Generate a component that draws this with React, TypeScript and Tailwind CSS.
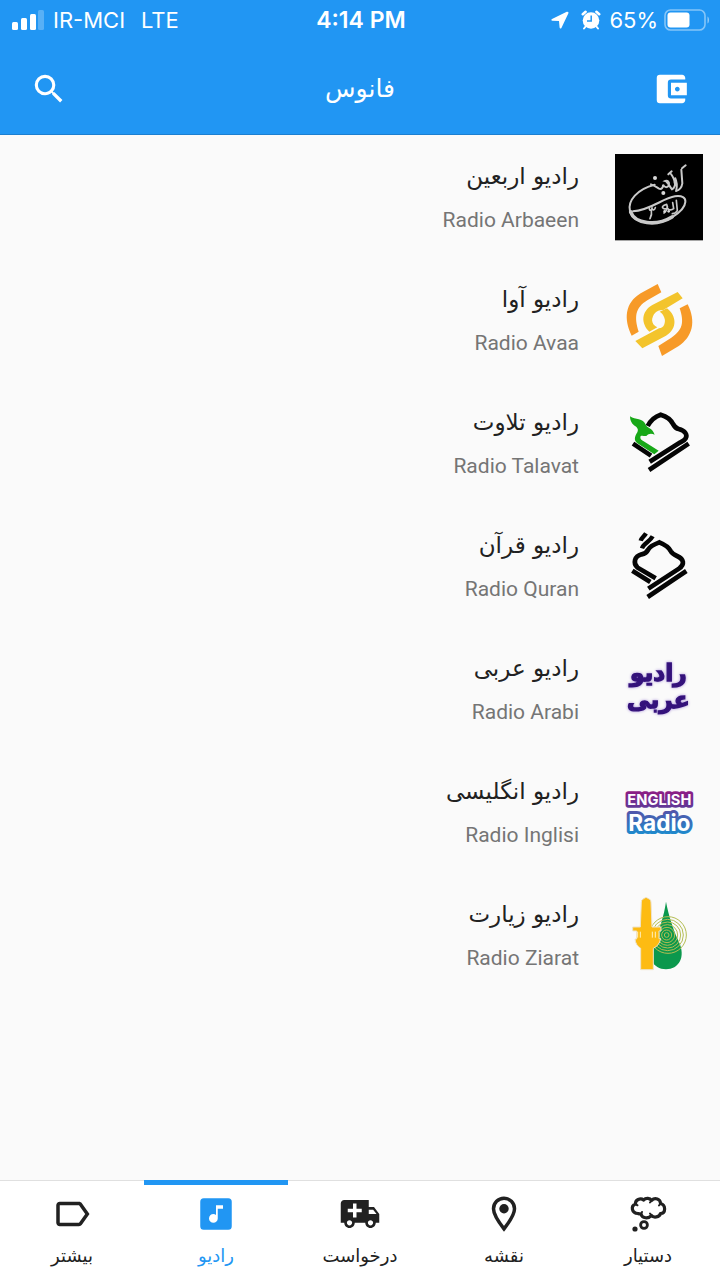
import type { ReactNode } from "react";
import { MdAccountBalanceWallet, MdLabelOutline, MdSearch } from "react-icons/md";

const persian = "font-['DejaVu_Sans',sans-serif]";

function SignalIcon() {
  return (
    <svg width="33" height="20" viewBox="0 0 33 20" fill="currentColor" aria-hidden="true">
      <rect x="0" y="12" width="6" height="8" rx="1.5" />
      <rect x="9" y="8" width="6" height="12" rx="1.5" />
      <rect x="18" y="4" width="6" height="16" rx="1.5" />
      <rect x="26" y="0" width="6" height="20" rx="1.5" opacity="0.25" />
    </svg>
  );
}

function LocationIcon() {
  return (
    <svg width="18" height="18" viewBox="0 0 18 18" fill="currentColor" aria-hidden="true">
      <path d="M15.800.8 1 8c-1 .5-.8 1.700.3 1.700l6.700.4.6 6.500c.1 1.100 1.300 1.300 1.800.3L17.400 2.300C17.900 1.200 16.900.3 15.800.8Z" />
    </svg>
  );
}

function AlarmIcon() {
  return (
    <svg width="20" height="20" viewBox="0 0 20 20" aria-hidden="true">
      <g stroke="currentColor" strokeLinecap="round" fill="none">
        <path d="M1.800 4.200 4.600 1.800M18.200 4.200 15.400 1.800" strokeWidth="2.600" />
        <path d="m5 16-2 2.500M15 16l2 2.500" strokeWidth="2" />
      </g>
      <circle cx="10" cy="10.500" r="8.300" fill="currentColor" />
      <path d="M10.200 5.500v5.500H6" stroke="#2196f3" strokeWidth="1.500" fill="none" />
    </svg>
  );
}

function BatteryIcon() {
  return (
    <svg width="46" height="22" viewBox="0 0 46 22" aria-hidden="true">
      <rect x="1" y="1" width="40" height="20" rx="5.500" fill="none" stroke="#fff" strokeOpacity="0.45" strokeWidth="1.600" />
      <rect x="3.500" y="3.500" width="22" height="15" rx="3" fill="#fff" />
      <path d="M43.500 7.500c2 1 2 6 0 7Z" fill="#fff" fillOpacity="0.5" />
    </svg>
  );
}

function ArbaeenLogo() {
  return (
    <svg viewBox="45 38 264 264" className="size-full" aria-hidden="true">
      <rect x="45" y="41" width="264" height="259" fill="#000" />
      <g fill="none" stroke="#c9c9c9" strokeLinecap="round">
        <path d="M164 133C112 146 82 181 90 212c10 39 82 48 129 17 48-31 49-67 6-61-36 5-76 43-126 45" strokeWidth="6" />
        <path d="M92 215c12 35 77 44 124 15" strokeWidth="11" />
        <path d="M153 132c9 3 17 9 24 13 8 3 13-4 12-12 6 11 16 9 18-1 1-7-4-13-11-10 7 2 12 16 20 25 9-3 11-16 9-35 5 11 7 23 4 36" strokeWidth="6" />
        <path d="m244 88 3 41c-2 13-9 20-19 23M213 101c7 10 11 17 11 27M246 84l11-9M205 102l10-9" strokeWidth="6" />
        <path d="M148 205c1 7 6 6 8-1 2 7 8 6 10-2M154 210c2 9 0 17-4 25M229 180l3 31c-4 7-9 9-15 9M218 187l3 18c-6 5-13 5-17 0M200 192c-12 2-17 10-8 13 8 3 13-3 8-13M201 195c2 9-2 19-9 23" strokeWidth="5" />
      </g>
      <g fill="#d8d8d8">
        <circle cx="165" cy="113" r="6" />
        <circle cx="190" cy="158" r="6" />
        <circle cx="194" cy="213" r="4" />
        <circle cx="206" cy="213" r="4" />
      </g>
    </svg>
  );
}

function AvaaLogo() {
  return (
    <svg viewBox="45 46 264 264" className="size-full" aria-hidden="true">
      <g fill="#f79a28">
        <path d="m173 70 11 25-42 24c-36 22-40 49-26 94l-21 12c-24-49-21-98 27-127Z" />
        <path d="m263 131-24 12c14 42 9 66-25 88l-39 25 11 30 49-29c43-28 54-75 28-126Z" />
      </g>
      <g fill="#f3c42c">
        <path d="m233 94 15 19-58 35c-21-1-33 13-33 30 0 10 5 18 15 22l-24 13c-26-25-24-61 9-80Z" />
        <path d="m106 241 71-38c15-1 21-18 16-32-3-9-8-15-14-18l22-10c28 21 33 61-3 82l-71 38Z" />
      </g>
      <circle cx="175" cy="179" r="18" fill="#fafafa" />
    </svg>
  );
}

function TalavatLogo() {
  return (
    <svg viewBox="45 40 264 264" className="size-full" aria-hidden="true">
      <g fill="none" stroke="#050505" strokeWidth="14">
        <path d="M143 121c8-15 20-28 39-34 17 5 31 15 37 28 5 9 8 13 17 15 20 5 27 18 21 28-3 6-10 9-16 12l-92 58" />
        <path d="m266 174-119 79M99 174l54 36" />
      </g>
      <path d="M90 92c16 12 39 3 48 27 5 9 18 7 26 28-10-5-18-4-25 4-6 1-11-2-17 0-3 8 2 12 9 16l45 28-13 11-52-34c-10-8-7-20 1-32 5-10-2-16-10-21-8-7-12-16-12-27Z" fill="#18a818" />
    </svg>
  );
}

function QuranLogo() {
  return (
    <svg viewBox="45 34 264 264" className="size-full" aria-hidden="true">
      <g fill="none" stroke="#050505" strokeWidth="14">
        <path d="m167 203-54-32c-15-13-10-34 12-40 12-2 16-7 20-15 5-9 17-15 33-21 17 7 29 15 34 26 4 8 10 11 19 15 21 9 24 26 6 38l-92 60" />
        <path d="M259 181 143 259M97 180l54 34" />
        <path d="M122 90c2-9 10-12 16-22M126 113c4-15 24-20 32-36" strokeWidth="13" />
      </g>
    </svg>
  );
}

function ArabiLogo() {
  return (
    <svg viewBox="45 14 264 264" className="size-full" aria-hidden="true">
      <g
        fill="#34127b"
        stroke="#34127b"
        strokeWidth="4"
        textAnchor="middle"
        direction="rtl"
        className="font-['DejaVu_Sans',sans-serif] font-bold drop-shadow-[0_0_4px_#a58cd8]"
      >
        <text x="175" y="121" fontSize="70">رادیو</text>
        <text x="175" y="203" fontSize="70">عربی</text>
      </g>
    </svg>
  );
}

function EnglishLogo() {
  return (
    <svg viewBox="45 -8 264 264" className="size-full" aria-hidden="true">
      <defs>
        <linearGradient id="english-top" x1="0" x2="0" y1="0" y2="1">
          <stop offset="0" stopColor="#8d1c84" />
          <stop offset="1" stopColor="#5c3b9a" />
        </linearGradient>
        <linearGradient id="english-bottom" x1="0" x2="0" y1="0" y2="1">
          <stop offset="0" stopColor="#5750a7" />
          <stop offset="1" stopColor="#198fd0" />
        </linearGradient>
      </defs>
      <g
        fill="#fff"
        strokeLinejoin="round"
        paintOrder="stroke"
        textAnchor="middle"
        className="font-['Inter',sans-serif] font-bold"
      >
        <text x="178" y="104" fontSize="44" stroke="url(#english-top)" strokeWidth="16">ENGLISH</text>
        <text x="178" y="181" fontSize="68" stroke="url(#english-bottom)" strokeWidth="18">Radio</text>
      </g>
    </svg>
  );
}

function ZiaratLogo() {
  return (
    <svg viewBox="45 32 264 264" className="size-full" aria-hidden="true">
      <path d="M198 64c8 42 22 84 38 119 23 48 0 84-38 84-39 0-61-38-37-84 17-34 31-76 37-119Z" fill="#0b984d" />
      <g fill="none" stroke="#b4bd52" strokeWidth="3">
        <circle cx="200" cy="164" r="7" />
        <circle cx="200" cy="164" r="15" />
        <circle cx="201" cy="164" r="23" />
        <circle cx="202" cy="164" r="31" />
        <circle cx="203" cy="164" r="39" />
        <circle cx="203" cy="164" r="47" />
        <circle cx="204" cy="164" r="55" />
      </g>
      <path d="M124 65c0-8 8-10 14-14 7 4 15 6 15 14l3 75h27v12h-6v23h5c-3 15-10 23-22 29v64h-38v-64c-10-7-16-15-17-28h5v-24h-12v-12h23Z" fill="#fdbb12" stroke="#eee4cd" strokeWidth="3" />
      <path d="M113 154v18m8-18v18m36-18v18m9-18v18" stroke="#fff0bd" strokeWidth="3" />
    </svg>
  );
}

function MusicBoxIcon() {
  return (
    <svg viewBox="0 0 24 24" fill="currentColor" className="size-[42px]" aria-hidden="true">
      <path d="M16,9H13V14.5A2.5,2.5 0 0,1 10.5,17A2.5,2.5 0 0,1 8,14.5A2.5,2.5 0 0,1 10.5,12C11.07,12 11.58,12.19 12,12.5V7H16M19,3H5A2,2 0 0,0 3,5V19A2,2 0 0,0 5,21H19A2,2 0 0,0 21,19V5A2,2 0 0,0 19,3Z" />
    </svg>
  );
}

function PinIcon() {
  return (
    <svg viewBox="0 0 24 24" className="size-[42px]" aria-hidden="true">
      <path d="M12 20.500C9.500 17.300 6 12.600 6 9a6 6 0 0 1 12 0c0 3.600-3.500 8.300-6 11.500Z" fill="none" stroke="currentColor" strokeWidth="2" />
      <circle cx="12" cy="9" r="2.700" fill="currentColor" />
    </svg>
  );
}

function AmbulanceIcon() {
  return (
    <svg viewBox="0 0 24 24" fill="currentColor" className="size-[42px]" aria-hidden="true">
      <path d="M18 18.5C18.83 18.5 19.5 17.83 19.5 17C19.5 16.17 18.83 15.5 18 15.5C17.17 15.5 16.5 16.17 16.5 17C16.5 17.83 17.17 18.5 18 18.5M19.5 9.5H17V12H21.46L19.5 9.5M6 18.5C6.83 18.5 7.5 17.83 7.5 17C7.5 16.17 6.83 15.5 6 15.5C5.17 15.5 4.5 16.17 4.5 17C4.5 17.83 5.17 18.5 6 18.5M20 8L23 12V17H21C21 18.66 19.66 20 18 20C16.34 20 15 18.66 15 17H9C9 18.66 7.66 20 6 20C4.34 20 3 18.66 3 17H1V6C1 4.89 1.89 4 3 4H17V8H20M8 6V9H5V11H8V14H10V11H13V9H10V6H8Z" />
    </svg>
  );
}

function ThoughtIcon() {
  return (
    <svg viewBox="0 0 42 42" fill="none" stroke="currentColor" className="size-[42px]" aria-hidden="true">
      <path
        d="M11 20.500C4.500 20 3.500 13 8.500 11C8 7 13.500 4.500 16.500 7C19 4.500 23 5 24.500 7.500C28 4 33.500 6 33.500 10.500C39 12 39 20 33.500 20.500C32.500 24.500 26.500 25 24.500 22.500C21.500 26 15 25.500 14 21C13 21 12 21 11 20.500Z"
        strokeWidth="3.200"
        strokeLinejoin="round"
      />
      <path d="M8.500 11 10.500 12.300M24.500 7.500 23 9.500M33.500 10.500 32 12.500M14 21 15 19M24.500 22.500 23 20.500" strokeWidth="2" strokeLinecap="round" />
      <circle cx="17" cy="32" r="3.400" strokeWidth="2.800" />
      <circle cx="8" cy="36" r="2.600" fill="currentColor" stroke="none" />
    </svg>
  );
}

const stations: { id: string; title: string; latin: string; logo: ReactNode }[] = [
  { id: "arbaeen", title: "رادیو اربعین", latin: "Radio Arbaeen", logo: <ArbaeenLogo /> },
  { id: "avaa", title: "رادیو آوا", latin: "Radio Avaa", logo: <AvaaLogo /> },
  { id: "talavat", title: "رادیو تلاوت", latin: "Radio Talavat", logo: <TalavatLogo /> },
  { id: "quran", title: "رادیو قرآن", latin: "Radio Quran", logo: <QuranLogo /> },
  { id: "arabi", title: "رادیو عربی", latin: "Radio Arabi", logo: <ArabiLogo /> },
  { id: "english", title: "رادیو انگلیسی", latin: "Radio Inglisi", logo: <EnglishLogo /> },
  { id: "ziarat", title: "رادیو زیارت", latin: "Radio Ziarat", logo: <ZiaratLogo /> },
];

const tabs: { id: string; label: string; icon: ReactNode; active?: boolean }[] = [
  { id: "assistant", label: "دستیار", icon: <ThoughtIcon /> },
  { id: "map", label: "نقشه", icon: <PinIcon /> },
  { id: "request", label: "درخواست", icon: <AmbulanceIcon /> },
  { id: "radio", label: "رادیو", icon: <MusicBoxIcon />, active: true },
  { id: "more", label: "بیشتر", icon: <MdLabelOutline className="size-[42px]" /> },
];

export default function App() {
  return (
    <div className="flex min-h-screen flex-col bg-[#fafafa]">
      <header className="border-b border-[#1c7fd0] bg-[#2196f3] text-white">
        <div className="grid h-10 grid-cols-[1fr_auto_1fr] items-center pr-2.5 pl-3 font-['Inter',sans-serif] text-[22px] leading-10">
          <div className="flex items-center gap-2">
            <SignalIcon />
            <span>IR-MCI</span>
            <span className="ml-2">LTE</span>
          </div>
          <span className="text-[23px] font-semibold">4:14 PM</span>
          <div className="flex items-center justify-end gap-1.5">
            <LocationIcon />
            <span className="ml-1.5 flex"><AlarmIcon /></span>
            <span className="ml-0.5">65%</span>
            <BatteryIcon />
          </div>
        </div>
        <div className="grid h-[94px] grid-cols-[1fr_auto_1fr] items-center px-[30px] pt-1">
          <button type="button" aria-label="Search" className="justify-self-start">
            <MdSearch className="size-[38px]" />
          </button>
          <h1 dir="rtl" className={`${persian} text-[25px] leading-9`}>فانوس</h1>
          <button type="button" aria-label="Wallet" className="justify-self-end">
            <MdAccountBalanceWallet className="size-[38px]" />
          </button>
        </div>
      </header>

      <main className="flex-1">
        <ul dir="rtl">
          {stations.map((station) => (
            <li key={station.id}>
              <a href={`#${station.id}`} className="flex h-[123px] items-center gap-9 px-[17px]">
                <span className="size-[88px] shrink-0">{station.logo}</span>
                <span className="flex flex-col items-start gap-2.5">
                  <span className={`${persian} text-[23px] leading-9 text-[#212121]`}>{station.title}</span>
                  <span dir="ltr" className="font-['Roboto',sans-serif] text-[21px] leading-8 text-[#757575]">
                    {station.latin}
                  </span>
                </span>
              </a>
            </li>
          ))}
        </ul>
      </main>

      <nav dir="rtl" className="grid h-[100px] grid-cols-5 border-t border-[#e0e0e0] bg-white">
        {tabs.map((tab) => (
          <a
            key={tab.id}
            href={`#${tab.id}`}
            aria-current={tab.active ? "page" : undefined}
            className={
              tab.active
                ? "-mt-px flex flex-col items-center border-t-[5px] border-[#2196f3] pt-2 text-[#2196f3]"
                : "-mt-px flex flex-col items-center border-t-[5px] border-transparent pt-2 text-[#212121]"
            }
          >
            {tab.icon}
            <span className={`${persian} text-lg leading-[42px]`}>{tab.label}</span>
          </a>
        ))}
      </nav>
    </div>
  );
}
